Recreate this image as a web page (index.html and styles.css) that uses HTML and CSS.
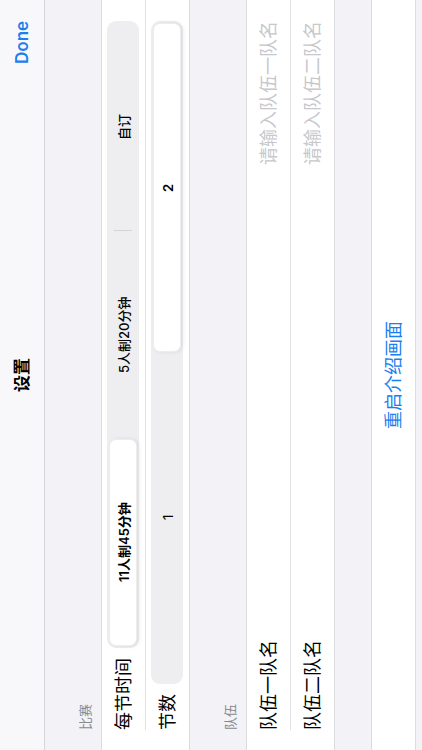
FILE: index.html
```html
<!DOCTYPE html>
<html lang="zh-CN">
<head>
<meta charset="utf-8">
<title>设置</title>
<link rel="stylesheet" href="styles.css">
</head>
<body>
<div class="screen">
  <header class="nav">
    <span></span>
    <h1 class="title">设置</h1>
    <span class="done">Done</span>
  </header>
  <main class="content">
    <div class="section-header">比赛</div>
    <div class="group">
      <div class="row">
        <span class="label">每节时间</span>
        <div class="segmented">
          <span class="seg selected">11人制45分钟</span>
          <span class="divider hidden"></span>
          <span class="seg">5人制20分钟</span>
          <span class="divider"></span>
          <span class="seg">自订</span>
        </div>
      </div>
      <div class="row">
        <span class="label">节数</span>
        <div class="segmented">
          <span class="seg">1</span>
          <span class="divider hidden"></span>
          <span class="seg selected">2</span>
        </div>
      </div>
    </div>
    <div class="section-header">队伍</div>
    <div class="group">
      <div class="row">
        <span class="label">队伍一队名</span>
        <span class="field">请输入队伍一队名</span>
      </div>
      <div class="row">
        <span class="label">队伍二队名</span>
        <span class="field">请输入队伍二队名</span>
      </div>
    </div>
    <div class="spacer"></div>
    <div class="group">
      <div class="row center">
        <span class="action">重启介绍画面</span>
      </div>
    </div>
  </main>
</div>
</body>
</html>
```
FILE: styles.css
```css
html, body {
  margin: 0;
  padding: 0;
  width: 422px;
  height: 750px;
  overflow: hidden;
  background: #f2f2f7;
}

/* Landscape UI shown rotated: block axis runs left→right, lines run bottom→top */
.screen {
  width: 422px;
  height: 750px;
  writing-mode: vertical-rl;
  text-orientation: sideways;
  transform: rotate(180deg);
  background: #f2f2f7;
  font-family: Inter, "Noto Sans CJK SC", "Noto Sans", sans-serif;
  color: #000;
  display: flex;
  flex-direction: column;
}

.nav {
  block-size: 44px;
  border-block-end: 1px solid #d6d6da;
  background: #f8f8fa;
  display: grid;
  grid-template-columns: 1fr auto 1fr;
  align-items: center;
  padding-inline: 20px 21px;
}

.title {
  margin: 0;
  font-size: 17px;
  font-weight: 700;
  line-height: 22px;
}

.done {
  justify-self: end;
  font-size: 17px;
  font-weight: 600;
  line-height: 22px;
  color: #1a80f0;
}

.content {
  display: flex;
  flex-direction: column;
}

.section-header {
  block-size: 56px;
  box-sizing: border-box;
  display: flex;
  align-items: flex-end;
  padding-inline: 20px;
  padding-block-end: 8px;
  font-size: 13px;
  line-height: 16px;
  color: #8a8a8e;
}

.group {
  background: #fff;
  border-block-start: 1px solid #dcdce0;
  border-block-end: 1px solid #dcdce0;
}

.row {
  block-size: 43px;
  margin-inline-start: 20px;
  padding-inline-end: 21px;
  display: flex;
  align-items: center;
  gap: 10px;
}

.row + .row {
  border-block-start: 1px solid #e2e2e6;
}

.row.center {
  justify-content: center;
}

.label {
  font-size: 18px;
  line-height: 22px;
  white-space: nowrap;
}

.segmented {
  flex: 1;
  block-size: 32px;
  box-sizing: border-box;
  padding: 2px;
  border-radius: 9px;
  background: #eeeef0;
  display: flex;
  align-items: center;
}

.seg {
  flex: 1;
  block-size: 100%;
  box-sizing: border-box;
  display: flex;
  align-items: center;
  justify-content: center;
  font-size: 13px;
  font-weight: 500;
  border-radius: 7px;
  border: 1px solid transparent;
  white-space: nowrap;
}

.seg.selected {
  background: #fff;
  font-weight: 600;
  border-color: rgba(0, 0, 0, 0.07);
  box-shadow: -2px 0 4px rgba(0, 0, 0, 0.08);
}

.divider {
  flex: none;
  inline-size: 1px;
  block-size: 18px;
  background: #d4d4d8;
}

.divider.hidden {
  background: transparent;
}

.field {
  flex: 1;
  min-inline-size: 0;
  text-align: end;
  font-size: 18px;
  line-height: 22px;
  color: #c7c7cc;
  white-space: nowrap;
}

.spacer {
  block-size: 36px;
}

.action {
  font-size: 18px;
  line-height: 22px;
  color: #1a80f0;
}
```
